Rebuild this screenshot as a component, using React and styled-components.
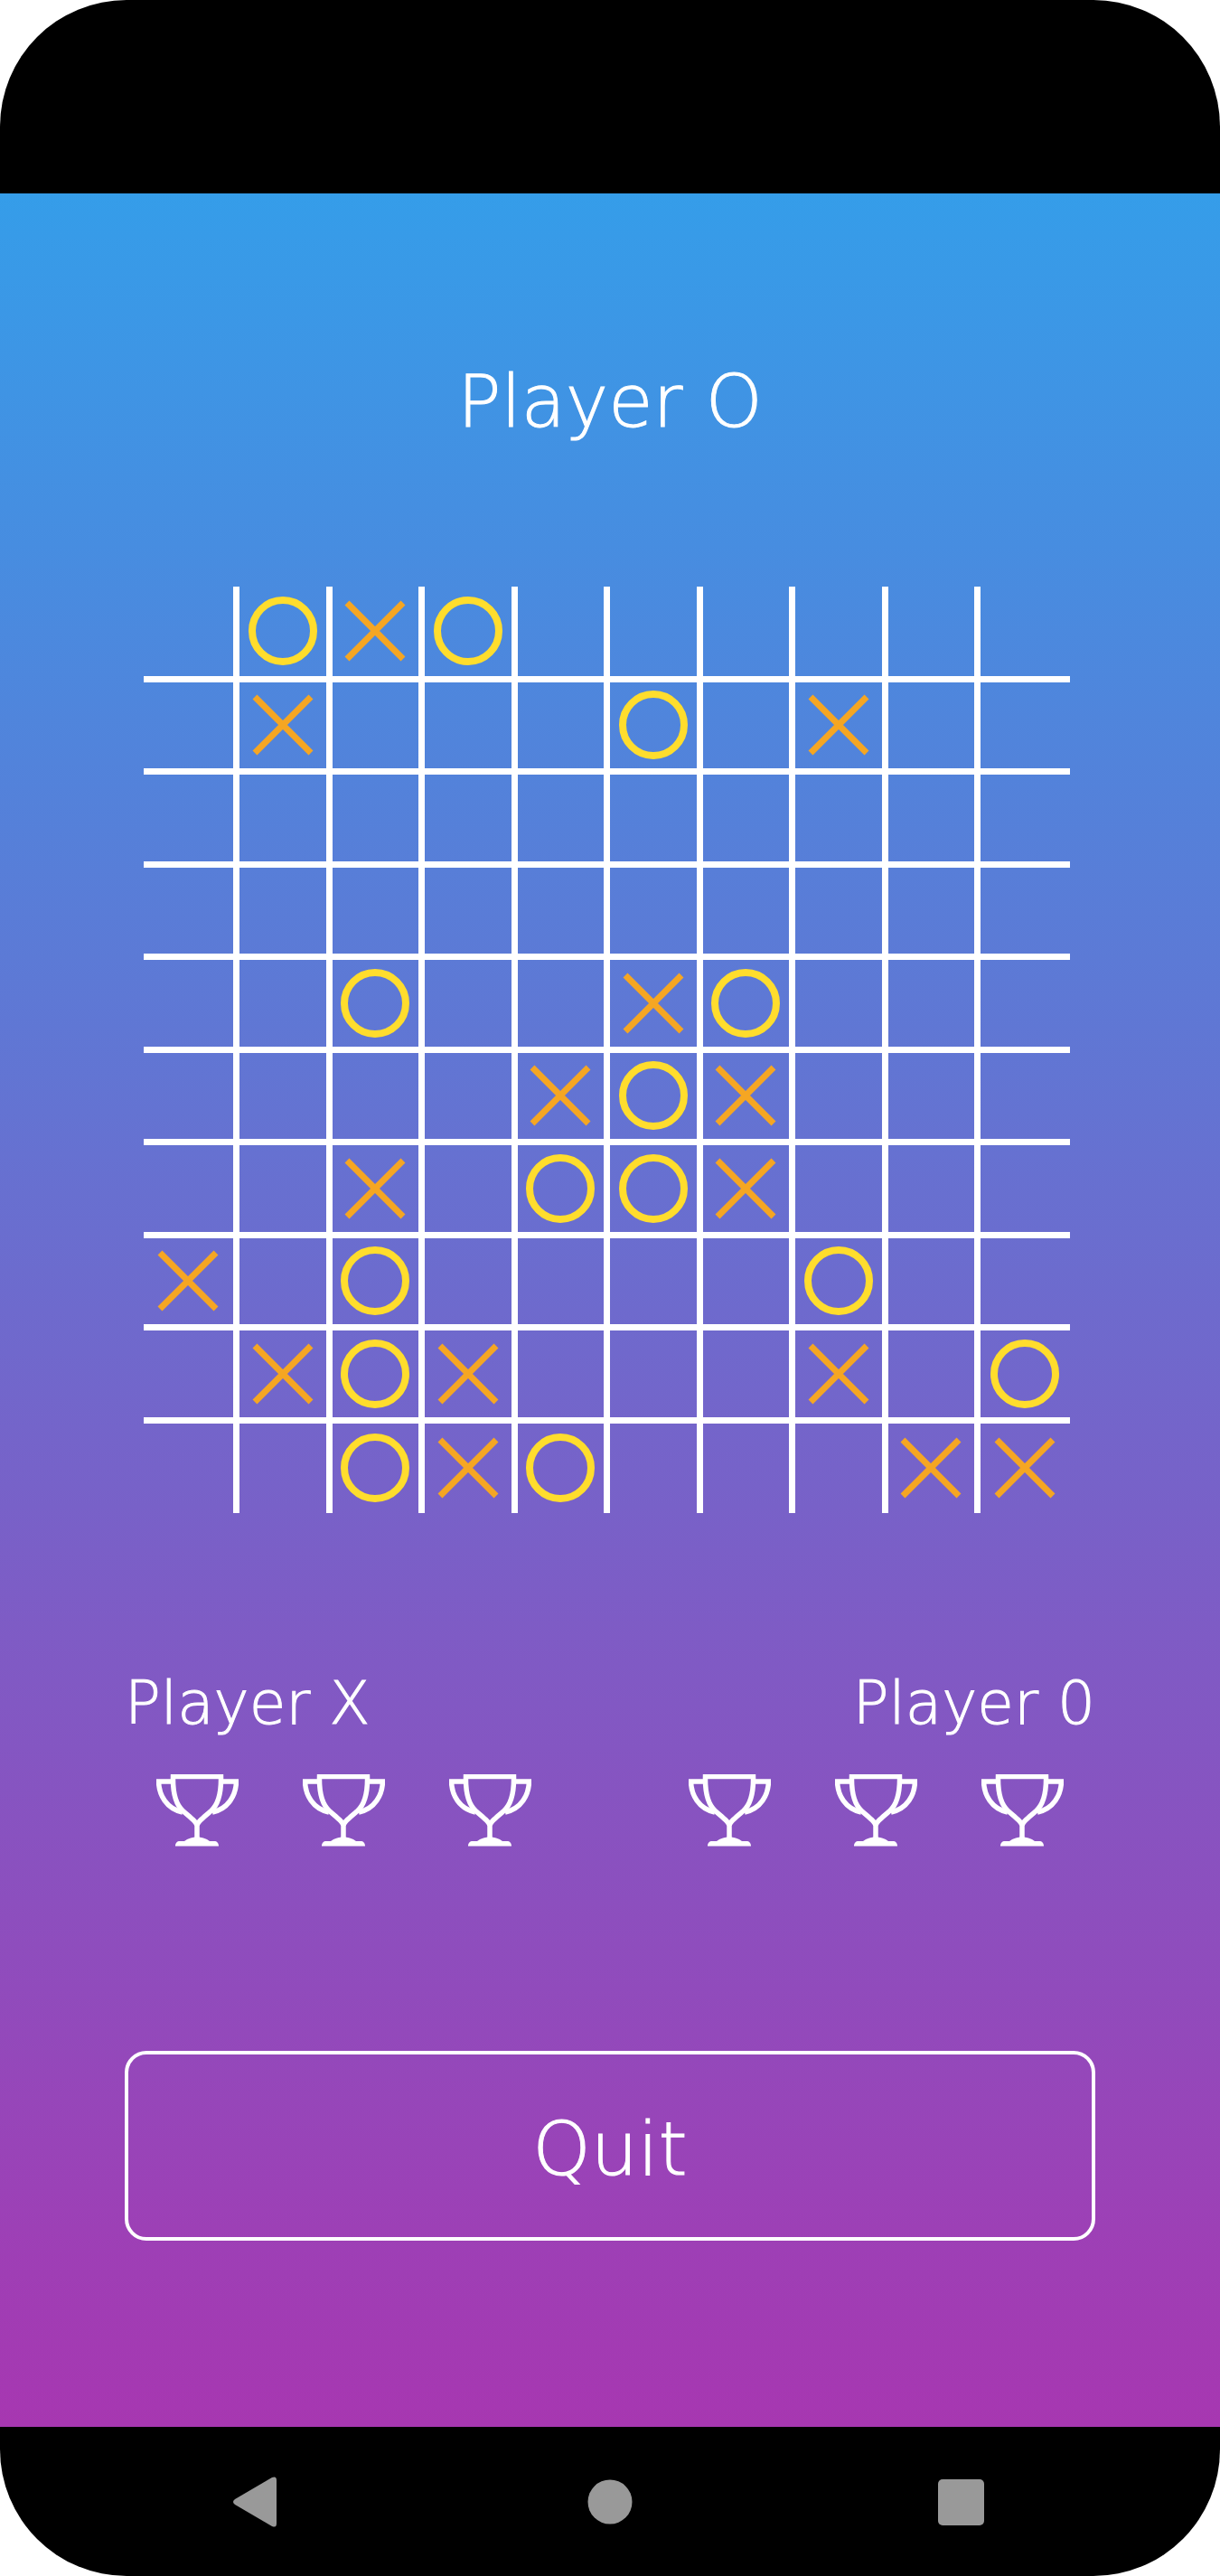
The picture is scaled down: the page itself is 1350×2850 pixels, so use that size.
import React, { useState } from "react";
import styled, { createGlobalStyle } from "styled-components";

const GlobalStyle = createGlobalStyle`
  * { box-sizing: border-box; }
  body {
    margin: 0;
    background: #fff;
    font-family: "DejaVu Sans Light", "DejaVu Sans", sans-serif;
    font-weight: 200;
    -webkit-text-stroke: 1px currentColor;
  }
`;

const Phone = styled.div`
  display: flex;
  flex-direction: column;
  min-height: 100vh;
  overflow: hidden;
  border-radius: 140px;
  background: #000;
`;

const StatusBar = styled.header`
  height: 214px;
`;

const Screen = styled.main`
  flex: 1;
  display: flex;
  flex-direction: column;
  align-items: center;
  padding: 183px 138px 206px;
  color: #fff;
  background: linear-gradient(180deg, #359de9, #a737b1);
`;

const Title = styled.h1`
  margin: 0;
  font-size: 80px;
  font-weight: inherit;
  line-height: 96px;
`;

const Board = styled.div`
  display: grid;
  grid-template-columns: repeat(10, 1fr);
  grid-template-rows: repeat(10, 1fr);
  width: 100%;
  max-width: 1025px;
  aspect-ratio: 1;
  margin: 156px 8px 0 0;
`;

const Cell = styled.button`
  display: grid;
  place-items: center;
  min-width: 0;
  min-height: 0;
  padding: 0;
  border: 0 solid #fff;
  border-radius: 0;
  background: none;
  cursor: pointer;

  &:not(:nth-child(10n + 1)) { border-left-width: 4px; }
  &:not(:nth-child(10n)) { border-right-width: 3px; }
  &:nth-child(n + 11) { border-top-width: 3px; }
  &:nth-child(-n + 90) { border-bottom-width: 4px; }
`;

const Mark = styled.svg`
  display: block;
  width: 76px;
  height: 76px;
  fill: none;
  stroke: ${(p) => (p.$o ? "#ffdd2d" : "#f5a623")};
  stroke-width: ${(p) => (p.$o ? 8 : 7)};
`;

const Scores = styled.section`
  display: grid;
  grid-template-columns: 1fr 1fr;
  gap: 104px;
  width: 100%;
  margin-top: 170px;
`;

const Score = styled.div`
  text-align: ${(p) => p.$align};
`;

const Name = styled.h2`
  margin: 0;
  font-size: 66px;
  font-weight: inherit;
  line-height: 82px;
`;

const Cups = styled.div`
  display: flex;
  margin-top: 37px;
`;

const CupSlot = styled.span`
  flex: 1;
  display: flex;
  justify-content: center;
`;

const Cup = styled.svg`
  display: block;
  width: 91px;
  height: 80px;
  fill: none;
  stroke: #fff;
  stroke-width: 5.500;
`;

const QuitButton = styled.button`
  width: 100%;
  height: 210px;
  margin-top: auto;
  padding: 6px 0 0;
  border: 4px solid #fff;
  border-radius: 24px;
  background: none;
  color: inherit;
  font: inherit;
  font-size: 82px;
  -webkit-text-stroke: inherit;
  cursor: pointer;
`;

const NavBar = styled.nav`
  display: flex;
  justify-content: space-between;
  align-items: center;
  height: 165px;
  padding: 0 258px;
`;

const NavButton = styled.button`
  padding: 0;
  border: 0;
  background: none;
  cursor: pointer;
`;

const NavIcon = styled.svg`
  display: block;
  width: 56px;
  height: 56px;
  fill: #999;
`;

const START = [
  ".OXO......",
  ".X...O.X..",
  "..........",
  "..........",
  "..O..XO...",
  "....XOX...",
  "..X.OOX...",
  "X.O....O..",
  ".XOX...X.O",
  "..OXO...XX",
].join("");

function Trophy() {
  return (
    <CupSlot>
      <Cup viewBox="0 0 91 80" aria-hidden="true">
        <path d="M18.500 2.500H71.500C72 25 66 36 60 41C54 46 45 53 45 57C45 53 36 46 30 41C24 36 18 25 18.500 2.500Z" />
        <path d="M17 8H2.500C3 23 11 38 29 42M73 8H88.500C88 23 80 38 62 42" />
        <path d="M45 54V73" />
        <path
          d="M21 79.500C21 76 23 74 26 74H31C35 71 39 69.500 45 69.500S55 71 59 74H64C67 74 69 76 69 79.500Z"
          fill="#fff"
          stroke="none"
        />
      </Cup>
    </CupSlot>
  );
}

function PlayerScore({ name, align }) {
  return (
    <Score $align={align}>
      <Name>{name}</Name>
      <Cups>
        <Trophy />
        <Trophy />
        <Trophy />
      </Cups>
    </Score>
  );
}

export default function App() {
  const [cells, setCells] = useState(START.split(""));
  const [turn, setTurn] = useState("O");

  const play = (index) => {
    if (cells[index] !== ".") return;
    setCells(cells.map((c, i) => (i === index ? turn : c)));
    setTurn(turn === "O" ? "X" : "O");
  };

  return (
    <>
      <GlobalStyle />
      <Phone>
        <StatusBar />
        <Screen>
          <Title>Player {turn}</Title>
          <Board>
            {cells.map((c, i) => (
              <Cell key={i} aria-label={`Cell ${i + 1}`} onClick={() => play(i)}>
                {c === "O" && (
                  <Mark $o viewBox="0 0 76 76">
                    <circle cx="38" cy="38" r="34" />
                  </Mark>
                )}
                {c === "X" && (
                  <Mark viewBox="0 0 76 76">
                    <path d="M7 7L69 69M69 7L7 69" />
                  </Mark>
                )}
              </Cell>
            ))}
          </Board>
          <Scores>
            <PlayerScore name="Player X" align="left" />
            <PlayerScore name="Player 0" align="right" />
          </Scores>
          <QuitButton>Quit</QuitButton>
        </Screen>
        <NavBar>
          <NavButton aria-label="Back">
            <NavIcon viewBox="0 0 56 56">
              <path d="M2 25L43 1Q48 -1 48 4V52Q48 57 43 55L2 31Q-2 28 2 25Z" />
            </NavIcon>
          </NavButton>
          <NavButton aria-label="Home">
            <NavIcon viewBox="0 0 56 56">
              <circle cx="28" cy="28" r="24.500" />
            </NavIcon>
          </NavButton>
          <NavButton aria-label="Recent apps">
            <NavIcon viewBox="0 0 56 56">
              <rect x="2" y="3" width="51" height="51" rx="5" />
            </NavIcon>
          </NavButton>
        </NavBar>
      </Phone>
    </>
  );
}
